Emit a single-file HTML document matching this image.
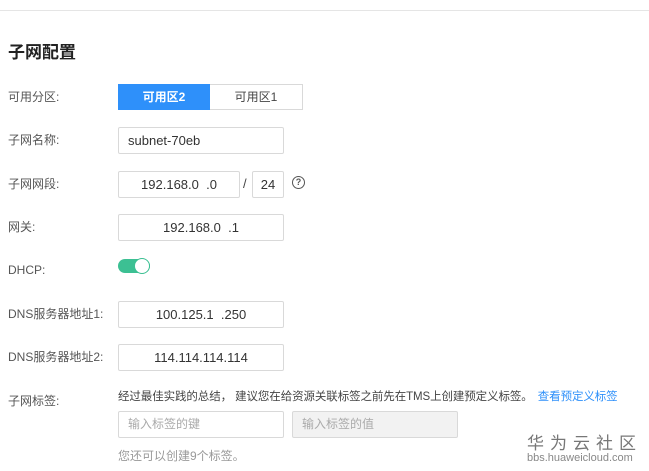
<!DOCTYPE html><html><head><meta charset="utf-8"><style>
body{margin:0;width:649px;height:471px;background:#fff;position:relative;overflow:hidden;font-family:"Liberation Sans","Noto Sans CJK SC",sans-serif;color:#333}
.a{position:absolute}
.line{left:0;top:10px;width:649px;height:1px;background:#e5e5e5}
.title{left:8px;top:38px;font-size:17px;font-weight:bold;color:#222}
.lbl{left:8px;font-size:12px;color:#555;line-height:16px}
.in{box-sizing:border-box;border:1px solid #d9d9d9;border-radius:2px;height:27px;font-size:13px;color:#333;line-height:25px;text-align:center;background:#fff}
</style></head><body>
<div class="a line"></div>
<div class="a title">子网配置</div>
<div class="a lbl" style="top:89px">可用分区:</div>
<div class="a" style="left:118px;top:84px;width:185px;height:26px;box-sizing:border-box;border:1px solid #d9d9d9;display:flex;font-size:12px;line-height:24px">
<div style="width:92px;background:#2e90fa;color:#fff;text-align:center;font-weight:bold;margin:-1px 0 -1px -1px;line-height:26px">可用区2</div><div style="flex:1;text-align:center;color:#444">可用区1</div></div>
<div class="a lbl" style="top:132px">子网名称:</div>
<div class="a in" style="left:118px;top:127px;width:166px;text-align:left;padding-left:9px">subnet-70eb</div>
<div class="a lbl" style="top:176px">子网网段:</div>
<div class="a in" style="left:118px;top:171px;width:122px">192.168.0&nbsp;&nbsp;.0</div>
<div class="a" style="left:243px;top:176px;font-size:13px;color:#444">/</div>
<div class="a in" style="left:252px;top:171px;width:32px">24</div>
<div class="a" style="left:292px;top:176px;width:11px;height:11px;border:1.5px solid #555;border-radius:50%;font-size:9px;line-height:11px;text-align:center;font-weight:bold;color:#555">?</div>
<div class="a lbl" style="top:219px">网关:</div>
<div class="a in" style="left:118px;top:214px;width:166px">192.168.0&nbsp;&nbsp;.1</div>
<div class="a lbl" style="top:262px">DHCP:</div>
<div class="a" style="left:118px;top:259px;width:32px;height:14px;border-radius:7px;background:#3cc093"></div>
<div class="a" style="left:134px;top:258px;width:14px;height:14px;border-radius:50%;background:#fff;border:1px solid #3cc093"></div>
<div class="a lbl" style="top:306px">DNS服务器地址1:</div>
<div class="a in" style="left:118px;top:301px;width:166px">100.125.1&nbsp;&nbsp;.250</div>
<div class="a lbl" style="top:349px">DNS服务器地址2:</div>
<div class="a in" style="left:118px;top:344px;width:166px">114.114.114.114</div>
<div class="a lbl" style="top:393px">子网标签:</div>
<div class="a" style="left:118px;top:388px;font-size:11.5px;letter-spacing:-0.1px;color:#444;white-space:nowrap">经过最佳实践的总结， 建议您在给资源关联标签之前先在TMS上创建预定义标签。 <span style="color:#2e90fa;margin-left:2px">查看预定义标签</span></div>
<div class="a in" style="left:118px;top:411px;width:166px;text-align:left;padding-left:9px;font-size:12px;color:#aaa">输入标签的键</div>
<div class="a in" style="left:292px;top:411px;width:166px;text-align:left;padding-left:9px;font-size:12px;color:#aaa;background:#f2f2f2">输入标签的值</div>
<div class="a" style="left:118px;top:447px;font-size:12px;color:#999">您还可以创建9个标签。</div>
<div class="a" style="left:527px;top:429px;font-size:17px;color:#777;letter-spacing:6px;white-space:nowrap">华为云社区</div>
<div class="a" style="left:527px;top:452px;font-size:11px;color:#888">bbs.huaweicloud.com</div>
</body></html>
